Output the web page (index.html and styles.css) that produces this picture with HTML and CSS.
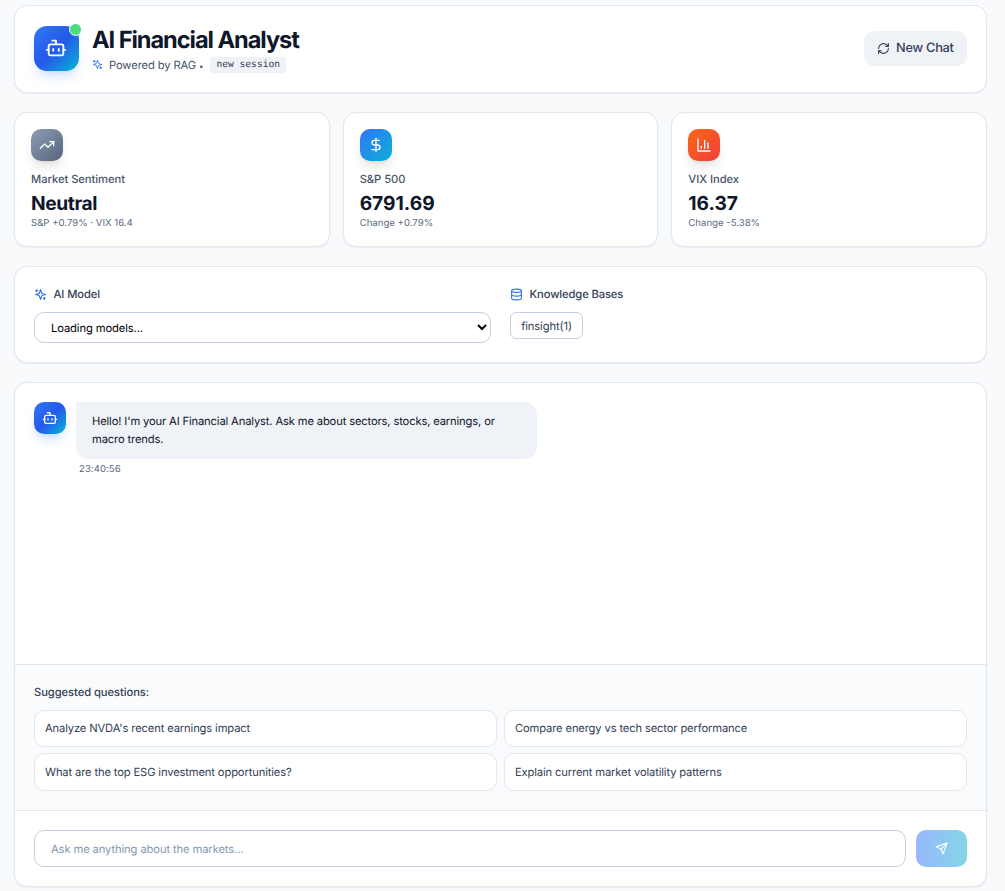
FILE: index.html
```html
<!DOCTYPE html>
<html lang="en">
<head>
<meta charset="utf-8">
<title>AI Financial Analyst</title>
<link rel="stylesheet" href="styles.css">
</head>
<body>
<svg width="0" height="0" class="defs">
  <symbol id="bot" viewBox="0 0 24 24"><path d="M12 8V4H8"/><rect width="16" height="12" x="4" y="8" rx="2"/><path d="M2 14h2M20 14h2M15 13v2M9 13v2"/></symbol>
  <symbol id="sparkles" viewBox="0 0 24 24"><path d="m12 3-1.9 5.8a2 2 0 0 1-1.3 1.3L3 12l5.8 1.9a2 2 0 0 1 1.3 1.3L12 21l1.9-5.8a2 2 0 0 1 1.3-1.3L21 12l-5.8-1.9a2 2 0 0 1-1.3-1.3Z"/><path d="M5 3v4M19 17v4M3 5h4M17 19h4"/></symbol>
</svg>
<main class="page">
  <header class="card header">
    <div class="brand">
      <div class="logo"><svg class="icon icon-bot"><use href="#bot"/></svg><span class="status"></span></div>
      <div class="brand-text">
        <h1>AI Financial Analyst</h1>
        <div class="powered"><svg class="icon icon-spark"><use href="#sparkles"/></svg><span class="powered-text">Powered by RAG <span class="dot">•</span></span><code>new session</code></div>
      </div>
    </div>
    <button class="new-chat"><svg class="icon" viewBox="0 0 24 24"><path d="M3 12a9 9 0 0 1 9-9 9.750 9.750 0 0 1 6.740 2.740L21 8"/><path d="M21 3v5h-5"/><path d="M21 12a9 9 0 0 1-9 9 9.750 9.750 0 0 1-6.740-2.740L3 16"/><path d="M8 16H3v5"/></svg><span>New Chat</span></button>
  </header>

  <section class="stats">
    <article class="card stat">
      <div class="tile slate"><svg class="icon" viewBox="0 0 24 24"><path d="m22 7-8.500 8.500-5-5L2 17"/><path d="M16 7h6v6"/></svg></div>
      <div class="label">Market Sentiment</div><div class="value word">Neutral</div><div class="note">S&amp;P +0.79% · VIX 16.4</div>
    </article>
    <article class="card stat">
      <div class="tile blue"><svg class="icon" viewBox="0 0 24 24"><path d="M12 2v20"/><path d="M17 5H9.500a3.500 3.500 0 0 0 0 7h5a3.500 3.500 0 0 1 0 7H6"/></svg></div>
      <div class="label">S&amp;P 500</div><div class="value">6791.69</div><div class="note">Change +0.79%</div>
    </article>
    <article class="card stat">
      <div class="tile orange"><svg class="icon" viewBox="0 0 24 24"><path d="M3 3v18h18"/><path d="M18 17V9M13 17V5M8 17v-3"/></svg></div>
      <div class="label">VIX Index</div><div class="value">16.37</div><div class="note">Change -5.38%</div>
    </article>
  </section>

  <section class="card settings">
    <div>
      <div class="field-label"><svg class="icon"><use href="#sparkles"/></svg>AI Model</div>
      <div class="select"><span>Loading models...</span><svg class="chevron" viewBox="0 0 10 7"><path d="m1 1 4 4 4-4"/></svg></div>
    </div>
    <div>
      <div class="field-label"><svg class="icon" viewBox="0 0 24 24"><ellipse cx="12" cy="5" rx="9" ry="3"/><path d="M3 5v14a9 3 0 0 0 18 0V5"/><path d="M3 12a9 3 0 0 0 18 0"/></svg>Knowledge Bases</div>
      <button class="chip">finsight(1)</button>
    </div>
  </section>

  <section class="card chat">
    <div class="messages">
      <div class="avatar"><svg class="icon"><use href="#bot"/></svg></div>
      <div>
        <div class="bubble">Hello! I'm your AI Financial Analyst. Ask me about sectors, stocks, earnings, or<br>macro trends.</div>
        <div class="time">23:40:56</div>
      </div>
    </div>
    <div class="suggested">
      <div class="suggested-title">Suggested questions:</div>
      <div class="questions">
        <button>Analyze NVDA's recent earnings impact</button>
        <button>Compare energy vs tech sector performance</button>
        <button>What are the top ESG investment opportunities?</button>
        <button>Explain current market volatility patterns</button>
      </div>
    </div>
    <div class="composer">
      <input type="text" placeholder="Ask me anything about the markets...">
      <button class="send" aria-label="Send"><svg class="icon" viewBox="0 0 24 24"><path d="m22 2-7 20-4-9-9-4Z"/><path d="M22 2 11 13"/></svg></button>
    </div>
  </section>
</main>
</body>
</html>
```
FILE: styles.css
```css
* { box-sizing: border-box; }
body {
  margin: 0;
  height: 891px;
  overflow: hidden;
  background: #f8fafc;
  color: #0f172a;
  font: 11.2px/16px Inter, sans-serif;
  letter-spacing: -.11px;
  text-rendering: geometricPrecision;
}
h1 { margin: 0; }
button, input { font: inherit; color: inherit; letter-spacing: inherit; margin: 0; text-rendering: inherit; }
.defs { position: absolute; }
.icon {
  display: block;
  flex: none;
  width: 13px;
  height: 13px;
  fill: none;
  stroke: currentColor;
  stroke-width: 2;
  stroke-linecap: round;
  stroke-linejoin: round;
}
.page {
  display: flex;
  flex-direction: column;
  gap: 19px;
  width: 973px;
  margin-left: 14px;
  padding-top: 5px;
}
.card {
  background: #fff;
  border: 1px solid #e0e7f0;
  border-radius: 13px;
  box-shadow: 0 1px 2px rgba(15, 23, 42, .06);
}

.header {
  display: flex;
  align-items: center;
  justify-content: space-between;
  height: 88px;
  padding: 0 19px 1px;
}
.brand { display: flex; align-items: center; gap: 13px; }
.logo, .avatar {
  display: grid;
  place-items: center;
  flex: none;
  color: #fff;
  background: linear-gradient(135deg, #3178f6, #2459e9 50%, #06b6d4);
  box-shadow: 0 8px 12px -2px rgba(59, 130, 246, .2), 0 3px 5px -3px rgba(59, 130, 246, .2);
}
.logo { position: relative; width: 45px; height: 45px; padding: 0 1px 1px 0; border-radius: 13px; }
.icon-bot { width: 22px; height: 22px; }
.status {
  position: absolute;
  top: -3px;
  right: -3px;
  width: 13px;
  height: 13px;
  border: 1px solid #fff;
  border-radius: 50%;
  background: #4ade80;
}
h1 { font-size: 23.6px; line-height: 29px; font-weight: 700; letter-spacing: -1.05px; }
.powered { display: flex; align-items: center; height: 16px; margin-top: 3px; color: #475569; }
.powered-text { padding-top: 2px; }
.dot { font-size: 8px; }
.icon-spark { width: 11px; height: 11px; margin-right: 6px; color: #2f6ff0; }
.powered code {
  margin-left: 7px;
  padding: 0 6px;
  border-radius: 3px;
  background: #eff2f7;
  color: #334155;
  font: 9.6px/16px "DejaVu Sans Mono", monospace;
  letter-spacing: 0;
}
.new-chat {
  display: flex;
  align-items: center;
  gap: 6px;
  width: 103px;
  height: 35px;
  padding: 0 13px;
  border: 0;
  border-radius: 10px;
  background: #eff2f7;
  color: #334155;
  font-size: 12.8px;
  font-weight: 500;
  letter-spacing: -.25px;
  white-space: nowrap;
}
.new-chat span { padding-top: 1px; }

.stats { display: grid; grid-template-columns: repeat(3, 1fr); gap: 13px; }
.stat { height: 135px; padding: 16px; letter-spacing: 0; }
.tile {
  display: grid;
  place-items: center;
  width: 32px;
  height: 32px;
  border-radius: 10px;
  color: #fff;
  box-shadow: 0 8px 12px -2px rgba(0, 0, 0, .1), 0 3px 5px -3px rgba(0, 0, 0, .1);
}
.tile .icon { width: 16px; height: 16px; }
.slate { background: linear-gradient(135deg, #8d9db4, #56657d); }
.blue { background: linear-gradient(135deg, #3178f6, #0cadd6); }
.orange { background: linear-gradient(135deg, #f96a14, #f03c3c); }
.label { margin-top: 10px; color: #475569; font-weight: 500; letter-spacing: -.04px; }
.value { margin-top: 4px; font-size: 19.2px; line-height: 24px; font-weight: 700; }
.word { letter-spacing: -.4px; }
.note { margin-top: 2px; color: #5c6b82; font-size: 9.6px; line-height: 14px; }

.settings {
  display: grid;
  grid-template-columns: 1fr 1fr;
  gap: 19px;
  height: 97px;
  padding: 19px;
}
.field-label {
  display: flex;
  align-items: center;
  gap: 6.5px;
  margin-bottom: 10px;
  color: #334155;
  font-weight: 500;
}
.field-label .icon { color: #2f6ff0; }
.select {
  display: flex;
  align-items: center;
  justify-content: space-between;
  height: 31px;
  padding: 0 3px 0 16px;
  border: 1px solid #c4d0e0;
  border-radius: 10px;
  color: #000;
}
.chevron { width: 10px; height: 7px; fill: none; stroke: #000; stroke-width: 2; }
.chip {
  display: block;
  width: 73px;
  height: 27px;
  padding: 0;
  border: 1px solid #c4d0e0;
  border-radius: 6px;
  background: #fff;
  color: #334155;
}

.chat { display: flex; flex-direction: column; height: 505px; overflow: hidden; }
.messages { display: flex; gap: 10px; flex: 1; padding: 19px; }
.avatar { width: 32px; height: 32px; border-radius: 10px; }
.avatar .icon { width: 16px; height: 16px; }
.bubble {
  width: 461px;
  height: 57px;
  padding: 10px 16px;
  border-radius: 2px 13px 13px 13px;
  background: #eff2f7;
  letter-spacing: -.145px;
  line-height: 18.2px;
  white-space: nowrap;
}
.time { margin: 4px 0 0 3px; color: #5c6b82; font-size: 9.6px; line-height: 13px; letter-spacing: .04px; }
.suggested {
  height: 146px;
  padding: 19px;
  border-top: 1px solid #dde5ee;
  background: #fafbfd;
}
.suggested-title { margin-bottom: 10px; color: #334155; font-weight: 500; letter-spacing: -.06px; }
.questions { display: grid; grid-template: 37px 38px / 1fr 1fr; gap: 6px 7px; }
.questions button {
  padding: 0 10px 1px;
  border: 1px solid #e0e7f0;
  border-radius: 10px;
  background: #fff;
  color: #334155;
  letter-spacing: -.14px;
  text-align: left;
}
.composer {
  display: flex;
  gap: 10px;
  height: 76px;
  padding: 19px;
  border-top: 1px solid #dde5ee;
}
.composer input {
  flex: 1;
  height: 37px;
  padding: 0 16px;
  border: 1px solid #c4d0e0;
  border-radius: 10px;
  background: #fff;
}
.composer input::placeholder { color: #8797b0; opacity: 1; }
.send {
  display: grid;
  place-items: center;
  width: 51px;
  height: 37px;
  padding: 0;
  border: 0;
  border-radius: 10px;
  background: linear-gradient(90deg, #98b8fc, #84d5e8);
  color: #fff;
}
```
